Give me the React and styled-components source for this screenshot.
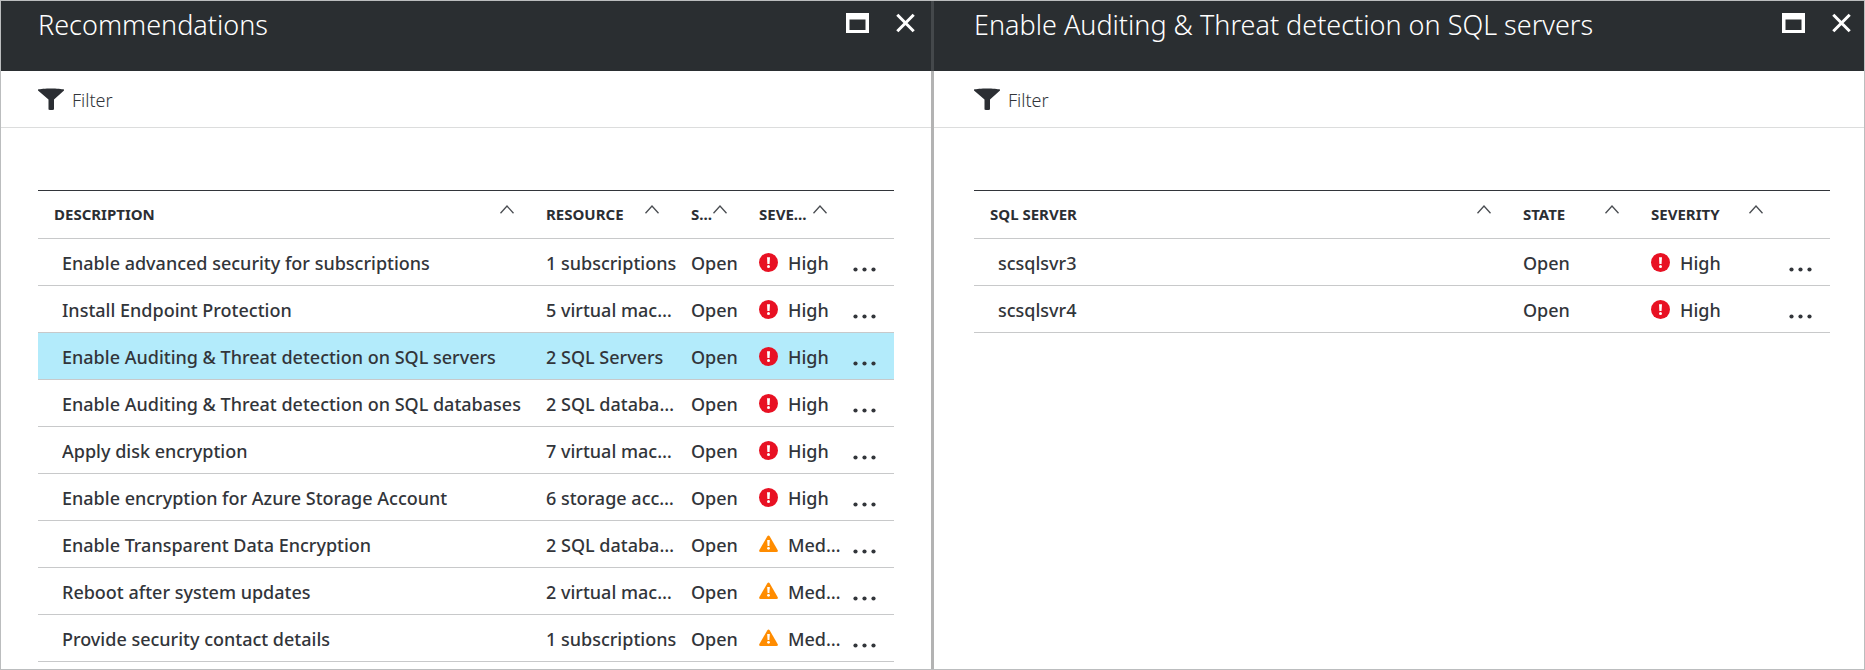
import React from "react";
import styled, { createGlobalStyle } from "styled-components";

const GlobalStyle = createGlobalStyle`
  *, *::before, *::after { box-sizing: border-box; }
  body {
    margin: 0;
    background: #fff;
    color: #32353a;
    font-family: "Noto Sans", "Open Sans", sans-serif;
    font-size: 18px;
  }
  button { font: inherit; color: inherit; background: none; border: 0; padding: 0; cursor: pointer; }
`;

const Workspace = styled.main`
  display: flex;
  min-height: 100vh;
  border: 1px solid #bbbdbe;
`;

const Divider = styled.div`
  flex: none;
  width: 3px;
  background: linear-gradient(#44484b 70px, #b3b3b3 70px);
`;

const Blade = styled.section`
  --lead: ${(p) => p.$lead}px;
  --trail: ${(p) => p.$trail}px;
  flex: 1 1 0;
  min-width: 0;
`;

const BladeHeader = styled.header`
  display: flex;
  align-items: flex-start;
  height: 70px;
  padding: 4px calc(var(--trail) - 21px) 0 var(--lead);
  background: #2a2e31;
  color: #fff;
`;

const BladeTitle = styled.h1`
  flex: 1;
  min-width: 0;
  margin: 0;
  font-size: 27px;
  line-height: 40px;
  font-weight: 300;
  white-space: nowrap;
  overflow: hidden;
`;

const WindowButtons = styled.div`
  display: flex;
  gap: 27px;
  padding-top: 8px;
`;

const IconButton = styled.button`
  display: flex;
  svg { display: block; }
`;

const CommandBar = styled.div`
  display: flex;
  align-items: center;
  height: 57px;
  padding: 0 var(--trail) 0 var(--lead);
  border-bottom: 1px solid #dcdddd;
`;

const FilterButton = styled.button`
  display: flex;
  align-items: center;
  gap: 8px;
  padding-top: 2px;
  font-weight: 300;
  line-height: 28px;
  svg { margin-bottom: 2px; }
`;

const BladeBody = styled.div`
  padding: 62px var(--trail) 7px var(--lead);
`;

const Table = styled.table`
  width: 100%;
  table-layout: fixed;
  border-collapse: separate;
  border-spacing: 0;
  border-top: 1px solid #32353a;
`;

const Col = styled.col`
  width: ${(p) => (p.$width ? `${p.$width}px` : "auto")};
`;

const HeadCell = styled.th`
  height: 48px;
  padding: 0 16px 2px;
  border-bottom: 1px solid #c8c9ca;
  text-align: left;
`;

const SortButton = styled.button`
  display: flex;
  align-items: center;
  justify-content: space-between;
  width: 100%;
  font-size: 15px;
  line-height: 24px;
  font-weight: 700;
  color: #2b2e33;
  text-transform: uppercase;
  svg { flex: none; margin-bottom: 8px; }
`;

const Ellipsis = styled.span`
  display: block;
  min-width: 0;
  overflow: hidden;
  text-overflow: ellipsis;
  white-space: nowrap;
`;

const CellText = styled(Ellipsis)`
  margin-right: -5px;
`;

const Row = styled.tr`
  background: ${(p) => (p.$selected ? "#b3ebfb" : "transparent")};
`;

const Cell = styled.td`
  height: 47px;
  padding: 1px 0 0 ${(p) => (p.$lead ? 24 : 16)}px;
  border-bottom: 1px solid #c8c9ca;
  line-height: 24px;
  font-weight: 500;
`;

const Severity = styled.div`
  display: flex;
  align-items: center;
  gap: 10px;
  svg { flex: none; }
`;

const MoreCell = styled(Cell)`
  padding: 15px 0 0 10px;
`;

const MaximizeIcon = () => (
  <svg width="23" height="20" viewBox="0 0 23 20" aria-hidden="true">
    <path d="M0 0h23v20H0zM3.500 6.500v10.500h16V6.500z" fill="#fff" fillRule="evenodd" />
  </svg>
);

const CloseIcon = () => (
  <svg width="19" height="20" viewBox="0 0 19 20" aria-hidden="true">
    <path d="M1.300 1.800l16.400 16.400M17.700 1.800L1.300 18.200" stroke="#fff" strokeWidth="3" fill="none" />
  </svg>
);

const FilterIcon = () => (
  <svg width="26" height="22" viewBox="0 0 26 22" aria-hidden="true">
    <path d="M0 1.500C4 0 22 0 26 1.500V2.500L16 11.500V21.500Q13 22.500 10.500 21.500V11.500L0 2.500z" fill="#2b2e33" />
  </svg>
);

const SortIcon = () => (
  <svg width="14" height="9" viewBox="0 0 14 9" aria-hidden="true">
    <path d="M.5 8.300L7 1l6.500 7.300" fill="none" stroke="#4a4d52" strokeWidth="1.300" />
  </svg>
);

const HighIcon = () => (
  <svg width="19" height="19" viewBox="0 0 19 19" aria-hidden="true">
    <circle cx="9.500" cy="9.500" r="9.500" fill="#e81123" />
    <path d="M8 4.300h3l-.4 6.700H8.400z" fill="#fff" />
    <circle cx="9.500" cy="13.500" r="1.500" fill="#fff" />
  </svg>
);

const MediumIcon = () => (
  <svg width="19" height="19" viewBox="0 0 19 19" aria-hidden="true">
    <path d="M8.200 1.500q1.300-2 2.600 0l7.800 13.500q.9 2-1.200 2H1.600q-2.100 0-1.200-2z" fill="#ff8c00" />
    <path d="M8.200 5h2.600l-.4 6H8.600z" fill="#fff" />
    <circle cx="9.500" cy="13.300" r="1.400" fill="#fff" />
  </svg>
);

const MoreIcon = () => (
  <svg width="24" height="5" viewBox="0 0 24 5" aria-hidden="true">
    <g fill="#32353a">
      <circle cx="2.500" cy="2.500" r="2.100" />
      <circle cx="11.500" cy="2.500" r="2.100" />
      <circle cx="20.500" cy="2.500" r="2.100" />
    </g>
  </svg>
);

const recommendationColumns = [
  { key: "description", label: "Description" },
  { key: "resource", label: "Resource", width: 145 },
  { key: "state", label: "State", width: 68 },
  { key: "severity", label: "Severity", width: 100 },
];

const recommendations = [
  { description: "Enable advanced security for subscriptions", resource: "1 subscriptions", state: "Open", severity: "High" },
  { description: "Install Endpoint Protection", resource: "5 virtual machines", state: "Open", severity: "High" },
  { description: "Enable Auditing & Threat detection on SQL servers", resource: "2 SQL Servers", state: "Open", severity: "High", selected: true },
  { description: "Enable Auditing & Threat detection on SQL databases", resource: "2 SQL databases", state: "Open", severity: "High" },
  { description: "Apply disk encryption", resource: "7 virtual machines", state: "Open", severity: "High" },
  { description: "Enable encryption for Azure Storage Account", resource: "6 storage accounts", state: "Open", severity: "High" },
  { description: "Enable Transparent Data Encryption", resource: "2 SQL databases", state: "Open", severity: "Medium" },
  { description: "Reboot after system updates", resource: "2 virtual machines", state: "Open", severity: "Medium" },
  { description: "Provide security contact details", resource: "1 subscriptions", state: "Open", severity: "Medium" },
];

const serverColumns = [
  { key: "server", label: "SQL Server" },
  { key: "state", label: "State", width: 128 },
  { key: "severity", label: "Severity", width: 144 },
];

const servers = [
  { server: "scsqlsvr3", state: "Open", severity: "High" },
  { server: "scsqlsvr4", state: "Open", severity: "High" },
];

function DataTable({ columns, rows }) {
  return (
    <Table>
      <colgroup>
        {columns.map((c) => (
          <Col key={c.key} $width={c.width} />
        ))}
        <Col $width={51} />
      </colgroup>
      <thead>
        <tr>
          {columns.map((c) => (
            <HeadCell key={c.key} scope="col">
              <SortButton type="button">
                <Ellipsis>{c.label}</Ellipsis>
                <SortIcon />
              </SortButton>
            </HeadCell>
          ))}
          <HeadCell aria-label="Actions" />
        </tr>
      </thead>
      <tbody>
        {rows.map((row) => (
          <Row key={row[columns[0].key]} $selected={row.selected}>
            {columns.map((c, i) => (
              <Cell key={c.key} $lead={i === 0}>
                {c.key === "severity" ? (
                  <Severity>
                    {row.severity === "High" ? <HighIcon /> : <MediumIcon />}
                    <Ellipsis>{row.severity}</Ellipsis>
                  </Severity>
                ) : (
                  <CellText>{row[c.key]}</CellText>
                )}
              </Cell>
            ))}
            <MoreCell>
              <IconButton type="button" aria-label="More actions">
                <MoreIcon />
              </IconButton>
            </MoreCell>
          </Row>
        ))}
      </tbody>
    </Table>
  );
}

function ListBlade({ title, lead, trail, columns, rows }) {
  return (
    <Blade $lead={lead} $trail={trail}>
      <BladeHeader>
        <BladeTitle>{title}</BladeTitle>
        <WindowButtons>
          <IconButton type="button" aria-label="Maximize">
            <MaximizeIcon />
          </IconButton>
          <IconButton type="button" aria-label="Close">
            <CloseIcon />
          </IconButton>
        </WindowButtons>
      </BladeHeader>
      <CommandBar>
        <FilterButton type="button">
          <FilterIcon />
          Filter
        </FilterButton>
      </CommandBar>
      <BladeBody>
        <DataTable columns={columns} rows={rows} />
      </BladeBody>
    </Blade>
  );
}

export default function App() {
  return (
    <>
      <GlobalStyle />
      <Workspace>
        <ListBlade title="Recommendations" lead={37} trail={37} columns={recommendationColumns} rows={recommendations} />
        <Divider />
        <ListBlade
          title="Enable Auditing & Threat detection on SQL servers"
          lead={40}
          trail={34}
          columns={serverColumns}
          rows={servers}
        />
      </Workspace>
    </>
  );
}
